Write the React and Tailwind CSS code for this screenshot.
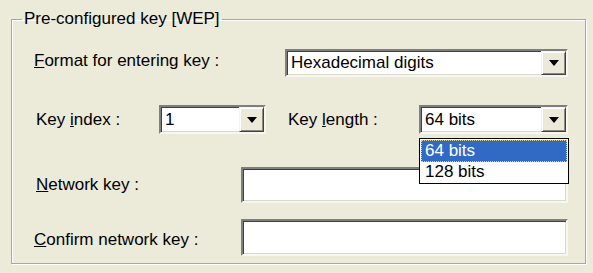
import React from 'react';

const sunken =
    'bg-white border-2 border-t-[#7f7f7f] border-l-[#7f7f7f] border-b-[#f7f6f0] border-r-[#f7f6f0] shadow-[inset_1px_1px_0_#404040,inset_-1px_-1px_0_#dcd9c8]';

const DropButton = () => (
    <div className="h-full w-[25px] bg-[#ece9d8] border border-t-[#f4f3ec] border-l-[#f4f3ec] border-b-[#404040] border-r-[#404040] shadow-[inset_1px_1px_0_#fff,inset_-1px_-1px_0_#8d8b80] flex items-center justify-center">
        <svg width="10" height="6" viewBox="0 0 10 6">
            <path d="M0 0h10L5 6z" fill="#000" />
        </svg>
    </div>
);

const Combo = ({ value, className = '', children }) => (
    <div className={`${sunken} ${className} relative flex items-stretch`}>
        <div className="flex-1 flex items-center pl-[4px]">{value}</div>
        <DropButton />
        {children}
    </div>
);

const App = () => {
    return (
        <div
            className="w-[593px] h-[273px] bg-[#ecead9] pt-[10px] pl-[11px] text-[17px] text-black overflow-hidden"
            style={{ fontFamily: '"Liberation Sans", Arial, sans-serif' }}
        >
            <fieldset className="w-[575px] h-[254px] border border-[#a9a795] shadow-[1px_1px_0_#fff,inset_1px_1px_0_#fff]">
                <legend className="ml-[10px] px-[2px] leading-[18px]">Pre-configured key [WEP]</legend>

                {/* format row */}
                <div className="flex items-center mt-[21px] h-[28px] pl-[22px]">
                    <span className="w-[251px] -mt-[4px]">
                        <u>F</u>ormat for entering key :
                    </span>
                    <Combo value="Hexadecimal digits" className="w-[283px] h-[28px]" />
                </div>

                {/* index / length row */}
                <div className="flex items-center mt-[28px] h-[29px] pl-[24px]">
                    <span className="w-[123px]">
                        Key <u>i</u>ndex :
                    </span>
                    <Combo value="1" className="w-[107px] h-[29px]" />
                    <span className="ml-[22px] w-[131px]">
                        Key <u>l</u>ength :
                    </span>
                    <Combo value="64 bits" className="w-[149px] h-[29px]">
                        {/* open list */}
                        <div className="absolute left-[-2px] top-[31px] w-[150px] bg-white border border-black p-[1px] z-10 leading-[20px]">
                            <div className="bg-[#316ac5] text-white pl-[3px] border border-dotted border-[#d8cfa0]">64 bits</div>
                            <div className="pl-[4px]">128 bits</div>
                        </div>
                    </Combo>
                </div>

                {/* network key */}
                <div className="flex items-center mt-[33px] h-[36px] pl-[24px]">
                    <span className="w-[205px]">
                        <u>N</u>etwork key :
                    </span>
                    <div className={`${sunken} w-[327px] h-[36px]`} />
                </div>

                {/* confirm */}
                <div className="flex items-center mt-[16px] h-[37px] pl-[22px]">
                    <span className="w-[207px] mt-[4px]">
                        <u>C</u>onfirm network key :
                    </span>
                    <div className={`${sunken} w-[327px] h-[37px]`} />
                </div>
            </fieldset>
        </div>
    );
};

export default App;
